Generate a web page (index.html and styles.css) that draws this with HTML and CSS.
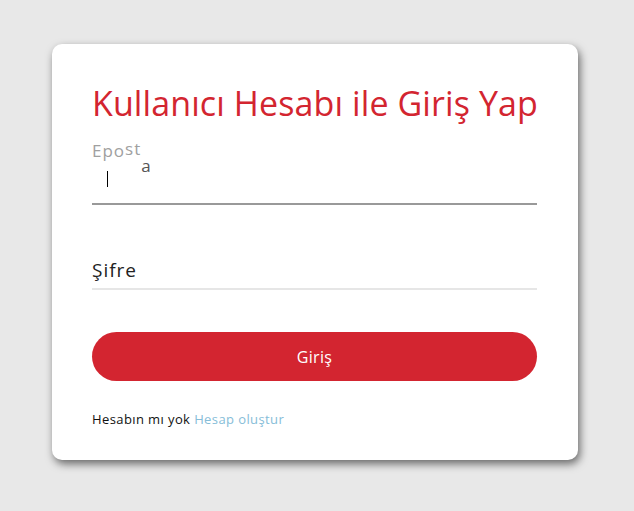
FILE: index.html
```html
<!DOCTYPE html>
<html lang="tr">
<head>
<meta charset="utf-8">
<link rel="stylesheet" href="styles.css">
</head>
<body>
<div class="card">
  <h1 class="title">Kullanıcı Hesabı ile Giriş Yap</h1>
  <div class="field field-email">
    <label class="wave"><span class="l">E</span><span class="l">p</span><span class="l">o</span><span class="l up">s</span><span class="l up">t</span><span class="l down">a</span></label>
    <div class="input"><span class="caret"></span></div>
  </div>
  <div class="field field-pass">
    <div class="input-pass"><span class="ph">Şifre</span></div>
  </div>
  <button class="btn">Giriş</button>
  <p class="foot">Hesabın mı yok <a class="link">Hesap oluştur</a></p>
</div>
</body>
</html>
```
FILE: styles.css
```css
* { box-sizing: border-box; }
body {
  margin: 0;
  background: #e8e8e8;
  font-family: "Open Sans", "DejaVu Sans", sans-serif;
  padding: 44px 0 0 52px;
  height: 511px;
}
.card {
  width: 526px;
  height: 416px;
  background: #fff;
  border-radius: 10px;
  box-shadow: 2px 4px 8px rgba(0,0,0,0.55);
  padding: 37px 41px 0 40px;
}
.title {
  margin: 0;
  font-weight: 400;
  font-size: 34px;
  line-height: 44px;
  letter-spacing: 0.1px;
  color: #d32530;
  white-space: nowrap;
}
.field-email { margin-top: 16px; }
.wave {
  display: block;
  height: 20px;
  font-size: 17px;
  line-height: 20px;
  color: #a0a0a0;
  letter-spacing: 1px;
}
.wave .l { display: inline-block; }
.wave .up { transform: translateY(-2px); }
.wave .down { transform: translateY(15px); color: #555; }
.input {
  height: 44px;
  border-bottom: 2px solid #999;
  display: flex;
  align-items: flex-start;
  padding: 10px 0 0 15px;
}
.caret {
  width: 1px;
  height: 16px;
  background: #000;
}
.field-pass { margin-top: 53px; }
.input-pass {
  border-bottom: 2px solid #e6e6e6;
  padding-bottom: 6px;
  font-size: 19px;
  line-height: 24px;
  letter-spacing: 1px;
  color: #222;
}
.btn {
  display: block;
  margin-top: 42px;
  width: 445px;
  height: 49px;
  border: 0;
  border-radius: 25px;
  background: #d32530;
  color: #fff;
  font-family: inherit;
  font-size: 16px;
  letter-spacing: 0.3px;
  padding: 0;
}
.foot {
  margin: 29px 0 0;
  font-size: 13px;
  line-height: 18px;
  letter-spacing: 0.4px;
  color: #111;
}
.link { color: #86bdd8; }
```
